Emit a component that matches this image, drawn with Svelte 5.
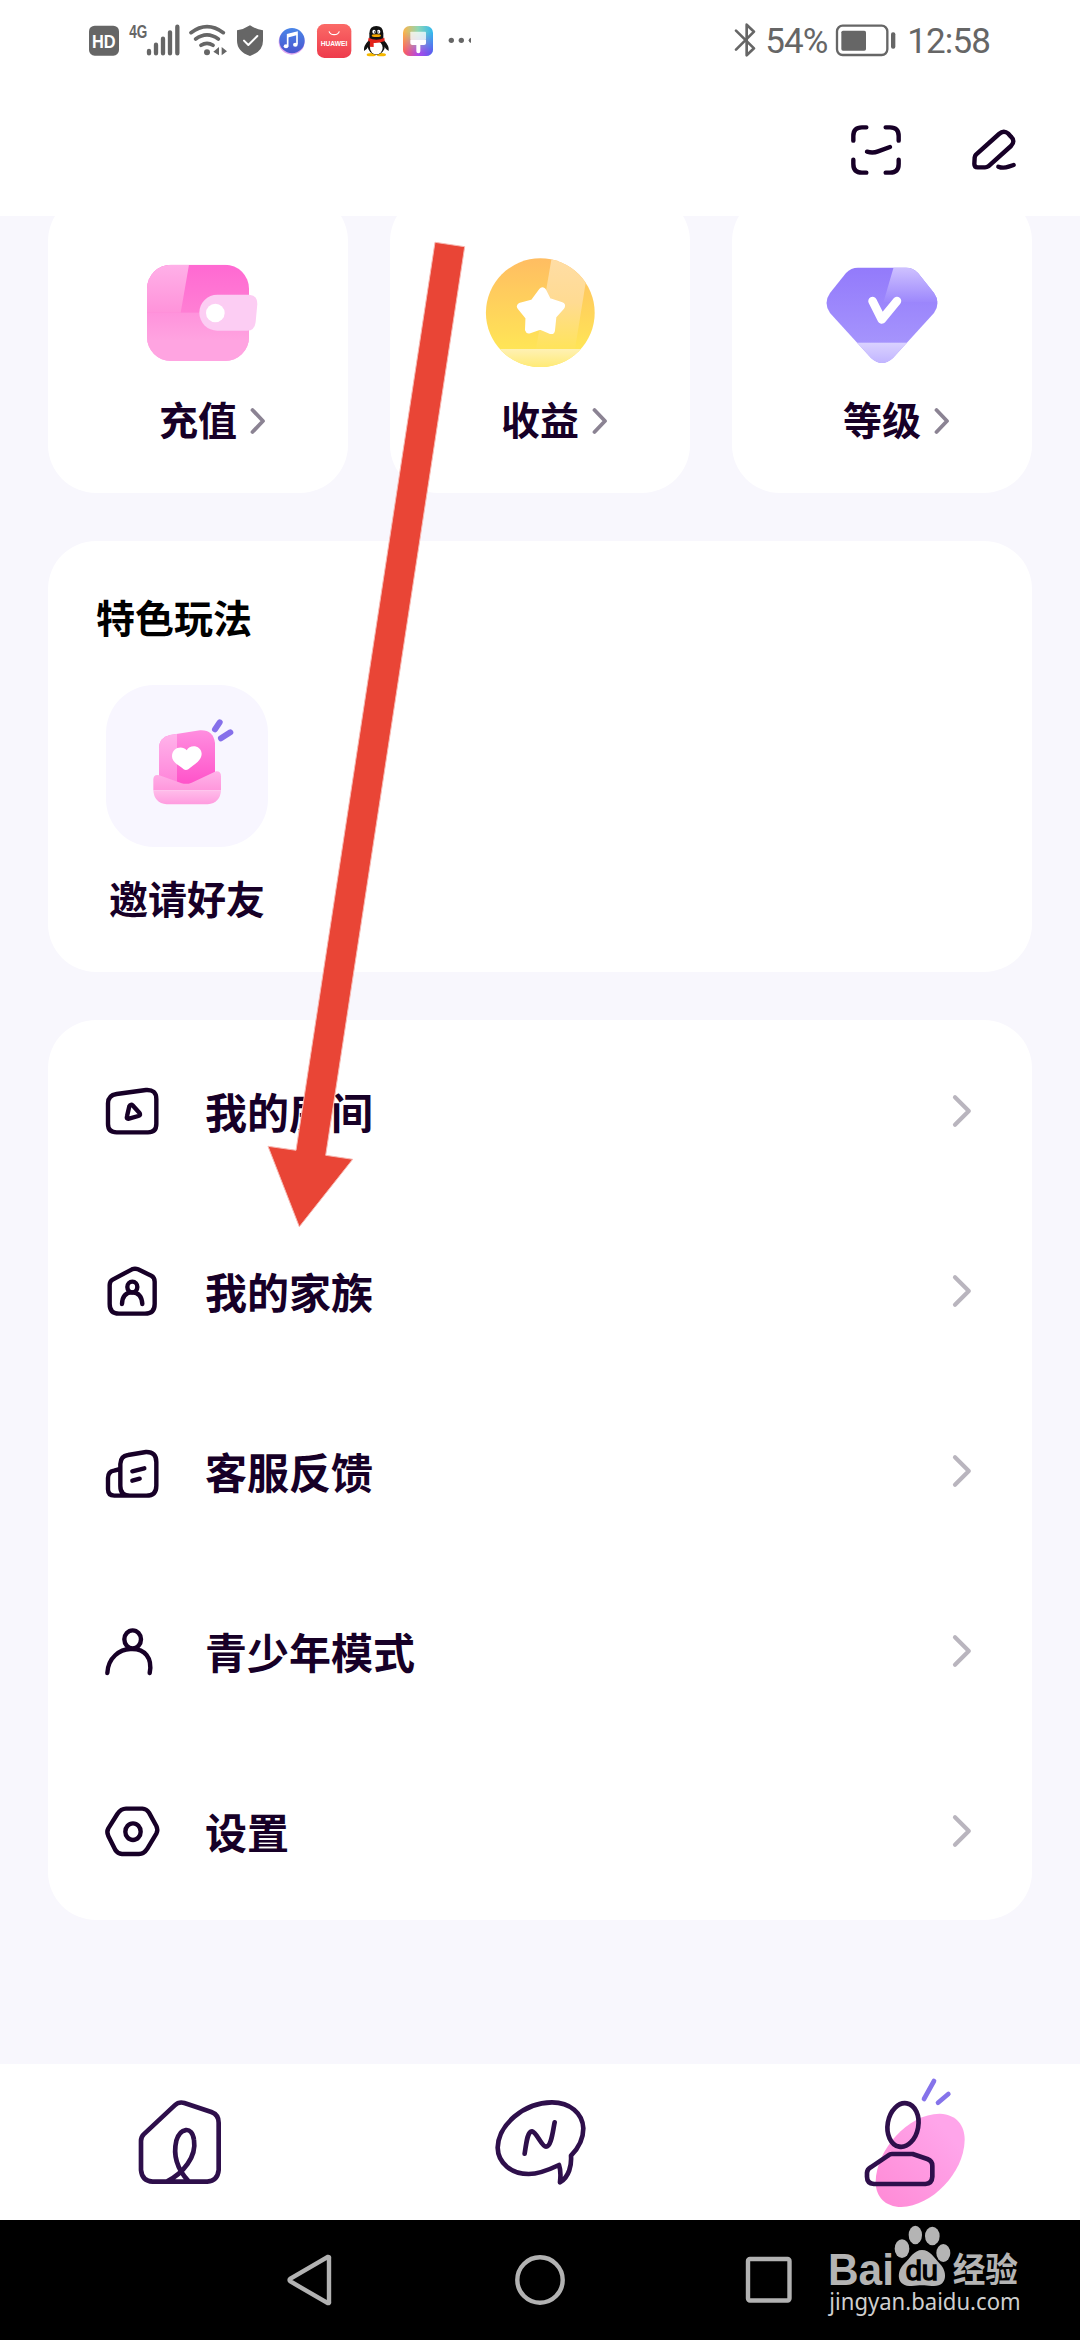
<script lang="ts">
  const menu = [
    { id: 'room', label: '我的房间' },
    { id: 'family', label: '我的家族' },
    { id: 'feedback', label: '客服反馈' },
    { id: 'teen', label: '青少年模式' },
    { id: 'settings', label: '设置' }
  ];

  const assets = [
    { id: 'recharge', label: '充值' },
    { id: 'income', label: '收益' },
    { id: 'level', label: '等级' }
  ];
</script>

<div class="screen">
  <div class="status-bar">
    <div class="status-left">
      <svg width="30" height="40" viewBox="57 60 90 120">
        <rect x="57" y="77" width="90" height="90" rx="17" fill="#666" />
        <text x="66" y="144" font-size="56" font-weight="700" textLength="71" lengthAdjust="spacingAndGlyphs" fill="#fff">HD</text>
      </svg>
      <svg width="54" height="40" viewBox="171 60 162 120">
        <text x="178" y="115" font-size="54" font-weight="700" textLength="54" lengthAdjust="spacingAndGlyphs" fill="#666">4G</text>
        <g stroke="#666" stroke-width="13" stroke-linecap="round">
          <path d="M237 153V160M258 134V160M279 116V160M300 97V160M322 80V160" />
        </g>
      </svg>
      <svg width="39" height="40" viewBox="357 60 117 120">
        <g fill="none" stroke="#666" stroke-width="11" stroke-linecap="round">
          <path d="M363 98Q411 62 460 98M377 117Q411 92 445 117M393 136Q411 124 429 136" />
        </g>
        <circle cx="411" cy="157" r="9" fill="#666" />
        <path d="M447 141V166L430 155ZM455 141V166L471 154Z" fill="#666" />
      </svg>
      <svg width="28" height="40" viewBox="498 60 84 120">
        <path d="M540 76Q558 88 579 91V122Q579 154 540 168Q501 154 501 122V91Q522 88 540 76Z" fill="#666" />
        <path d="M522 122L535 135L562 108" fill="none" stroke="#fff" stroke-width="6" stroke-linecap="round" stroke-linejoin="round" />
      </svg>
      <svg width="36" height="40" viewBox="606 60 108 120">
        <defs>
          <linearGradient id="music" x1="0" y1="0" x2="0" y2="1">
            <stop offset="0" stop-color="#4a86e8" />
            <stop offset="1" stop-color="#4a55cf" />
          </linearGradient>
        </defs>
        <circle cx="665" cy="125" r="39" fill="#e0a8f0" />
        <circle cx="666" cy="122" r="38" fill="url(#music)" />
        <path d="M653 139V104L681 97V133" fill="none" stroke="#fff" stroke-width="5" />
        <path d="M653 108L681 101" stroke="#fff" stroke-width="9" />
        <ellipse cx="648" cy="139" rx="7" ry="6" fill="#fff" />
        <ellipse cx="676" cy="134" rx="7" ry="6" fill="#fff" />
      </svg>
      <svg width="36" height="40" viewBox="738 60 108 120">
        <defs>
          <linearGradient id="huawei" x1="0" y1="0" x2="0" y2="1">
            <stop offset="0" stop-color="#fb6a67" />
            <stop offset="1" stop-color="#ee3b4c" />
          </linearGradient>
        </defs>
        <rect x="741" y="72" width="103" height="102" rx="22" fill="url(#huawei)" />
        <path d="M777 94A16 13 0 0 0 808 94" fill="none" stroke="#fff" stroke-width="3.5" />
        <text x="752" y="138" font-size="19" font-weight="700" textLength="80" lengthAdjust="spacingAndGlyphs" fill="#fff">HUAWEI</text>
      </svg>
      <svg width="34" height="40" viewBox="870 60 102 120">
        <ellipse cx="904" cy="164" rx="14" ry="5" fill="#f5b800" />
        <ellipse cx="934" cy="164" rx="14" ry="5" fill="#f5b800" />
        <path d="M897 120Q879 138 882 153Q890 150 896 138ZM941 120Q959 138 956 153Q948 150 942 138Z" fill="#111" />
        <ellipse cx="919" cy="137" rx="26" ry="27" fill="#111" />
        <path d="M898 118V100Q899 78 919 78Q939 78 940 100V118Z" fill="#111" />
        <ellipse cx="919" cy="143" rx="19" ry="20" fill="#fff" />
        <ellipse cx="912" cy="95" rx="5" ry="6" fill="#fff" />
        <ellipse cx="926" cy="95" rx="5" ry="6" fill="#fff" />
        <circle cx="914" cy="96" r="2" fill="#111" />
        <circle cx="924" cy="96" r="2" fill="#111" />
        <ellipse cx="919" cy="107" rx="14" ry="4" fill="#f5a800" />
        <path d="M896 113Q919 125 943 113L944 123Q928 130 911 129V141L899 140L900 125L894 122Z" fill="#e2231a" />
      </svg>
      <svg width="32" height="40" viewBox="996 60 96 120">
        <defs>
          <linearGradient id="themeBase" x1="0" y1="0" x2="1" y2="0">
            <stop offset="0" stop-color="#ffb347" />
            <stop offset="0.5" stop-color="#8fd6b4" />
            <stop offset="1" stop-color="#30b8f0" />
          </linearGradient>
          <linearGradient id="themeLow" x1="0" y1="0" x2="1" y2="0">
            <stop offset="0" stop-color="#ff5a5a" />
            <stop offset="0.5" stop-color="#b04ae8" />
            <stop offset="1" stop-color="#5a5af0" />
          </linearGradient>
          <linearGradient id="themeFade" x1="0" y1="0" x2="0" y2="1">
            <stop offset="0.2" stop-color="#000" />
            <stop offset="0.9" stop-color="#fff" />
          </linearGradient>
          <mask id="themeMask">
            <rect x="999" y="78" width="90" height="90" fill="url(#themeFade)" />
          </mask>
        </defs>
        <rect x="999" y="78" width="90" height="90" rx="20" fill="url(#themeBase)" />
        <rect x="999" y="78" width="90" height="90" rx="20" fill="url(#themeLow)" mask="url(#themeMask)" />
        <rect x="1021" y="95" width="47" height="25" rx="2" fill="#fff" opacity="0.75" />
        <path d="M1021 120H1068V130Q1068 135 1062 135H1051V154Q1051 160 1045 160Q1039 160 1039 154V135H1027Q1021 135 1021 130Z" fill="#fff" />
      </svg>
      <svg width="30" height="40" viewBox="1116 60 90 120">
        <circle cx="1144" cy="121" r="8" fill="#666" />
        <circle cx="1174" cy="121" r="8" fill="#666" />
        <path d="M1203 113V129Q1196 127 1196 121Q1196 115 1203 113Z" fill="#666" />
      </svg>
    </div>
    <div class="status-right">
      <svg width="24" height="40" viewBox="96 60 72 120">
        <path d="M105 92L159 145L137 166V74L159 95L105 149" fill="none" stroke="#666" stroke-width="8" stroke-linecap="round" stroke-linejoin="round" />
      </svg>
      <span class="battery-text">54%</span>
      <svg width="61" height="40" viewBox="402 60 183 120">
        <rect x="408" y="77" width="151" height="88" rx="17" fill="none" stroke="#666" stroke-width="7" />
        <rect x="421" y="92" width="74" height="60" rx="5" fill="#666" />
        <rect x="570" y="97" width="13" height="49" rx="6" fill="#666" />
      </svg>
      <span class="clock">12:58</span>
    </div>
  </div>

  <header class="header">
    <svg width="60" height="60" viewBox="438 361 180 180" class="line">
      <path d="M460 423V409Q460 383 486 383H499M557 383H570Q596 383 596 409V423M596 480V493Q596 519 570 519H557M499 519H486Q460 519 460 493V480M501 456Q519 461 534 455L570 442" />
    </svg>
    <svg width="60" height="60" viewBox="793 361 180 180" class="line">
      <path d="M829 465L898 403Q912 390 926 402L934 411Q948 424 934 439L866 500Q862 503 856 503H834Q824 503 824 493L825 474Q826 468 829 465ZM896 501Q910 507 927 501L942 496" />
    </svg>
  </header>

  <main class="content">
    <div class="assets">
      {#each assets as asset}
        <div class="asset">
          {#if asset.id === 'recharge'}
            <svg width="120" height="120" viewBox="324 159 360 360">
              <defs>
                <linearGradient id="walletBase" x1="0" y1="0" x2="0" y2="1">
                  <stop offset="0" stop-color="#ff69d2" />
                  <stop offset="0.5" stop-color="#ff7fd4" />
                  <stop offset="1" stop-color="#ffa6e4" />
                </linearGradient>
                <linearGradient id="walletShine" x1="0" y1="0" x2="0" y2="1">
                  <stop offset="0" stop-color="#ffb0e8" />
                  <stop offset="1" stop-color="#ff93da" />
                </linearGradient>
                <linearGradient id="walletLow" x1="0" y1="0" x2="0" y2="1">
                  <stop offset="0" stop-color="#ff93dc" />
                  <stop offset="1" stop-color="#ffa3e0" />
                </linearGradient>
                <clipPath id="walletClip"><rect x="351" y="194" width="306" height="289" rx="72" /></clipPath>
              </defs>
              <g clip-path="url(#walletClip)">
                <rect x="351" y="194" width="306" height="289" fill="url(#walletBase)" />
                <path d="M351 194H477L452 338H351Z" fill="url(#walletShine)" />
                <rect x="351" y="338" width="306" height="82" fill="url(#walletLow)" />
                <rect x="351" y="420" width="306" height="63" fill="#ffa4e1" />
              </g>
              <path d="M562 284H657Q682 286 682 312L677 365Q674 392 651 392H562A54 54 0 0 1 562 284Z" fill="#fccdf3" />
              <circle cx="556" cy="339" r="28" fill="#fff" />
            </svg>
          {:else if asset.id === 'income'}
            <svg width="120" height="120" viewBox="480 253 120 120">
              <defs>
                <linearGradient id="coinBase" x1="0" y1="0" x2="0" y2="1">
                  <stop offset="0" stop-color="#ffbd62" />
                  <stop offset="0.85" stop-color="#ffe656" />
                </linearGradient>
                <linearGradient id="coinShine" x1="0" y1="0" x2="0" y2="1">
                  <stop offset="0" stop-color="#ffdda6" />
                  <stop offset="0.5" stop-color="#ffdb92" />
                  <stop offset="1" stop-color="#ffe45a" />
                </linearGradient>
                <linearGradient id="coinLow" x1="0" y1="0" x2="0" y2="1">
                  <stop offset="0" stop-color="#fff1b4" />
                  <stop offset="1" stop-color="#ffea70" />
                </linearGradient>
                <clipPath id="coinClip"><circle cx="540.3" cy="312.7" r="54.4" /></clipPath>
              </defs>
              <g clip-path="url(#coinClip)">
                <rect x="485" y="258" width="110" height="110" fill="url(#coinBase)" />
                <path d="M552 256H590L575 349H536Z" fill="url(#coinShine)" />
                <rect x="485" y="349" width="110" height="20" fill="url(#coinLow)" />
              </g>
              <path d="M542.5 291.5L547.5 301.5L561 306L552.5 315.5L551 330L540.5 325.5L529 329.5L529.5 317L521 306.5L534 303Z" fill="#fff" stroke="#fff" stroke-width="8" stroke-linejoin="round" />
            </svg>
          {:else}
            <svg width="120" height="120" viewBox="822 253 120 120">
              <defs>
                <linearGradient id="gemBase" x1="0" y1="0" x2="0" y2="1">
                  <stop offset="0" stop-color="#9279fb" />
                  <stop offset="1" stop-color="#ab9cfd" />
                </linearGradient>
                <linearGradient id="gemShine" x1="0" y1="0" x2="0" y2="1">
                  <stop offset="0" stop-color="#cfc2ff" />
                  <stop offset="1" stop-color="#9d88fc" />
                </linearGradient>
                <linearGradient id="gemLow" x1="0" y1="0" x2="0" y2="1">
                  <stop offset="0" stop-color="#dad2ff" />
                  <stop offset="1" stop-color="#bdb0ff" />
                </linearGradient>
                <clipPath id="gemClip">
                  <path d="M858 267.7H906Q913 267.7 918 273L934 293Q941 303 934 313L893 358Q882 368 871 358L830 313Q823 303 830 293L846 273Q851 267.7 858 267.7Z" />
                </clipPath>
              </defs>
              <g clip-path="url(#gemClip)">
                <rect x="822" y="264" width="120" height="104" fill="url(#gemBase)" />
                <path d="M893.7 267L883.5 302H942V267Z" fill="url(#gemShine)" />
                <rect x="822" y="342.7" width="120" height="24" fill="url(#gemLow)" />
              </g>
              <path d="M872.5 301L881.8 319.5L897 301" fill="none" stroke="#fff" stroke-width="8.5" stroke-linecap="round" stroke-linejoin="round" />
            </svg>
          {/if}
          <div class="asset-label">
            <span>{asset.label}</span>
            <svg width="16" height="28" viewBox="0 0 16 28">
              <path d="M2.5 3L13 14L2.5 25" fill="none" stroke="#8b8393" stroke-width="3.8" stroke-linecap="round" stroke-linejoin="round" />
            </svg>
          </div>
        </div>
      {/each}
    </div>

    <section class="features">
      <h2>特色玩法</h2>
      <div class="feature">
        <div class="feature-tile">
          <svg width="162" height="162" viewBox="198 464 486 486">
            <defs>
              <linearGradient id="letter" x1="0" y1="0" x2="0" y2="1">
                <stop offset="0" stop-color="#ff8fe0" />
                <stop offset="1" stop-color="#ff4fc8" />
              </linearGradient>
              <linearGradient id="letterShine" x1="0" y1="0" x2="0" y2="1">
                <stop offset="0" stop-color="#ffb8ec" />
                <stop offset="1" stop-color="#ff80d8" />
              </linearGradient>
              <linearGradient id="envelope" x1="0" y1="0" x2="0" y2="1">
                <stop offset="0" stop-color="#ffb3e9" />
                <stop offset="1" stop-color="#ff97dc" />
              </linearGradient>
              <linearGradient id="envelopeLow" x1="0" y1="0" x2="0" y2="1">
                <stop offset="0" stop-color="#ffbdea" />
                <stop offset="1" stop-color="#ff9bdf" />
              </linearGradient>
              <clipPath id="letterClip">
                <path d="M357 770V655Q357 621 390 614L480 600Q520 598 525 638V770Z" />
              </clipPath>
            </defs>
            <g clip-path="url(#letterClip)">
              <rect x="357" y="596" width="168" height="176" fill="url(#letter)" />
              <rect x="357" y="596" width="54" height="176" fill="url(#letterShine)" />
            </g>
            <path d="M340 746Q342 730 358 735L425 759Q440 763 455 757L528 723Q543 722 543 738V780H340Z" fill="url(#envelope)" />
            <path d="M340 780H543Q541 818 503 822H380Q342 818 340 780Z" fill="url(#envelopeLow)" />
            <path d="M440 660C428 645 396 650 396 678C396 698 420 706 431 717Q438 722 446 716C458 705 485 692 485 670C484 645 450 640 440 660Z" fill="#fff" />
            <path d="M525 597L539 576M543 624L571 606" stroke="#8670ea" stroke-width="18" stroke-linecap="round" />
          </svg>
        </div>
        <span class="feature-label">邀请好友</span>
      </div>
    </section>

    <ul class="menu">
      {#each menu as item}
        <li class="menu-item">
          {#if item.id === 'room'}
            <svg width="60" height="60" viewBox="186 210 180 180" class="line">
              <path d="M230 252L318 240Q349 238 349 267V342Q349 367 324 367H230Q204 367 204 342V280Q204 256 230 252ZM268 289Q272 281 279 287L298 308Q304 315 295 318L267 326Q258 328 261 319Z" />
            </svg>
          {:else if item.id === 'family'}
            <svg width="60" height="60" viewBox="186 750 180 180" class="line">
              <path d="M218 809L276 778Q285 774 294 778L334 797Q344 802 344 815V882Q344 911 315 911H237Q209 911 209 882V825Q209 814 218 809Z" />
              <ellipse cx="277" cy="831" rx="15" ry="16" />
              <path d="M246 882Q247 847 277 847Q305 848 307 882" />
            </svg>
          {:else if item.id === 'feedback'}
            <svg width="60" height="60" viewBox="186 120 180 180" class="line">
              <path d="M264 165L318 156Q349 155 349 186V257Q349 287 319 287H270Q241 287 241 258V192Q242 168 264 165ZM241 207L222 212Q204 215 204 234V268Q204 287 223 287H270M277 214L313 205M277 242L299 236" />
            </svg>
          {:else if item.id === 'teen'}
            <svg width="60" height="60" viewBox="186 660 180 180" class="line">
              <ellipse cx="278" cy="718" rx="25" ry="27" />
              <path d="M202 819C204 772 240 748 271 747C315 744 338 775 329 819" />
            </svg>
          {:else}
            <svg width="60" height="60" viewBox="186 1200 180 180" class="line">
              <path d="M258 1226H307Q320 1227 327 1238L349 1278Q355 1290 349 1301L322 1346Q312 1362 297 1362H246Q233 1361 226 1350L205 1308Q199 1296 205 1285L232 1242Q243 1226 258 1226Z" />
              <ellipse cx="279" cy="1295" rx="23" ry="25" />
            </svg>
          {/if}
          <span class="menu-label">{item.label}</span>
          <svg width="24" height="36" viewBox="0 0 24 36">
            <path d="M4 5.2L17.8 19L4 32.8" fill="none" stroke="#b9b5be" stroke-width="4.2" stroke-linecap="round" stroke-linejoin="round" />
          </svg>
        </li>
      {/each}
    </ul>
  </main>

  <nav class="tabs">
    <svg width="180" height="156" viewBox="-30 42 540 468" class="tab-icon">
      <path d="M131 253L224 166Q237 154 253 159L334 186Q356 194 356 218V360Q353 392 322 395H158Q126 393 123 360V273Q123 261 131 253ZM200 395C250 370 290 320 282 270C276 225 240 235 229 272C220 310 225 350 266 394" />
    </svg>
    <svg width="180" height="156" viewBox="1050 42 540 468" class="tab-icon">
      <path d="M1413 317C1440 290 1450 260 1450 235C1448 190 1410 157 1356 157C1270 158 1195 225 1193 293C1194 340 1235 372 1286 372C1320 372 1350 358 1377 345C1383 362 1382 380 1380 397C1408 380 1415 345 1413 317ZM1274 311C1280 270 1283 245 1296 244C1310 246 1325 290 1338 290C1354 290 1358 245 1364 217" />
    </svg>
    <svg width="180" height="156" viewBox="30 42 540 468" class="tab-icon">
      <defs>
        <linearGradient id="blob" x1="1" y1="0" x2="0" y2="1">
          <stop offset="0.2" stop-color="#ffa5ea" />
          <stop offset="0.9" stop-color="#ff8dd8" />
        </linearGradient>
      </defs>
      <path d="M420 191C470 194 494 225 494 270C492 370 395 468 304 471C255 470 227 440 227 395C228 300 325 190 420 191Z" fill="url(#blob)" stroke="none" />
      <ellipse cx="309" cy="225" rx="46" ry="66" transform="rotate(10 309 225)" />
      <path d="M276 312H338L382 327Q397 333 397 347V380Q396 401 376 402H222Q201 400 201 380V368Q202 358 212 352L264 317Q270 312 276 312Z" />
      <path d="M372 147L402 93M414 158L445 132" class="spark" />
    </svg>
  </nav>

  <div class="system-nav">
    <svg width="60" height="60" viewBox="0 0 60 60">
      <path d="M49 8.5Q49.5 6.500 47.5 7L10.5 28.5Q8.500 30 10.5 31.5L47.5 53Q49.5 53.5 49 51.5Z" />
    </svg>
    <svg width="60" height="60" viewBox="0 0 60 60">
      <circle cx="30" cy="30" r="22.7" />
    </svg>
    <svg width="60" height="60" viewBox="0 0 60 60">
      <rect x="9" y="9" width="41.5" height="41.5" rx="2" />
    </svg>
  </div>

  <svg class="pointer" width="1080" height="2340" viewBox="0 0 1080 2340">
    <path d="M435 242.3L464.7 246.7L325.7 1155.3L352.7 1159.3L299.3 1226.7L268 1146.3L296 1150.3Z" fill="#e94536" stroke="#f7b9b3" stroke-width="1" />
  </svg>

  <svg class="watermark" width="240" height="120" viewBox="75 510 720 360">
    <g fill="#b4b4b4">
      <text x="84" y="704" font-size="132" font-weight="700" textLength="198" lengthAdjust="spacingAndGlyphs">Bai</text>
      <ellipse cx="306" cy="596" rx="22" ry="28" />
      <ellipse cx="346" cy="555" rx="20" ry="28" />
      <ellipse cx="397" cy="558" rx="22" ry="28" />
      <ellipse cx="430" cy="609" rx="21" ry="27" />
      <path d="M366 600C390 600 402 622 420 642C440 660 446 708 402 708C385 709 378 706 366 706C354 706 345 709 328 708C286 705 292 660 312 642C330 625 342 600 366 600Z" />
      <text x="458" y="697" font-size="101" class="cjk" textLength="196" lengthAdjust="spacingAndGlyphs">经验</text>
    </g>
    <text x="317" y="689" font-size="82" textLength="97" lengthAdjust="spacingAndGlyphs" fill="#000" stroke="#000" stroke-width="4">du</text>
    <text x="88" y="780" font-size="68" class="url" textLength="574" lengthAdjust="spacingAndGlyphs" fill="#cfcfcf">jingyan.baidu.com</text>
  </svg>
</div>

<style>
  :global(body) {
    margin: 0;
  }

  .screen {
    position: relative;
    display: flex;
    flex-direction: column;
    width: 1080px;
    height: 2340px;
    overflow: hidden;
    background: #f8f7fd;
    color: #170027;
    font-family: 'Liberation Sans', 'Noto Sans CJK SC', sans-serif;
  }

  svg {
    display: block;
    flex: none;
  }

  .status-bar {
    display: flex;
    justify-content: space-between;
    height: 80px;
    padding: 20px 90px 0 89px;
    box-sizing: border-box;
    background: #fff;
  }

  .status-left {
    display: flex;
    gap: 8px;
  }

  .status-right {
    display: flex;
    color: #666;
    font-family: Roboto, sans-serif;
    font-size: 35px;
    line-height: 44px;
    white-space: nowrap;
  }

  .battery-text {
    width: 70px;
    margin-left: 8px;
    letter-spacing: -1px;
  }

  .clock {
    margin-left: 11px;
    letter-spacing: -0.9px;
  }

  .header {
    display: flex;
    justify-content: flex-end;
    gap: 58px;
    height: 136px;
    padding: 40px 56px 0 0;
    box-sizing: border-box;
    background: #fff;
  }

  .line {
    fill: none;
    stroke: #170027;
    stroke-width: 13.2;
    stroke-linecap: round;
    stroke-linejoin: round;
  }

  .content {
    display: flex;
    flex-direction: column;
    gap: 48px;
    height: 1848px;
    padding: 0 48px;
    box-sizing: border-box;
    overflow: hidden;
  }

  .assets {
    display: flex;
    gap: 42px;
    margin-top: -23px;
  }

  .asset {
    display: flex;
    flex: 1;
    flex-direction: column;
    align-items: center;
    height: 300px;
    padding-top: 60px;
    box-sizing: border-box;
    border-radius: 48px;
    background: #fff;
  }

  .asset-label {
    display: flex;
    align-items: center;
    gap: 13px;
    height: 56px;
    margin-top: 20px;
    padding-left: 29px;
    font-size: 39px;
    font-weight: 700;
  }

  .asset-label span {
    padding-bottom: 6px;
  }

  .features {
    flex: none;
    height: 431px;
    padding: 51px 48px 0;
    box-sizing: border-box;
    border-radius: 48px;
    background: #fff;
  }

  h2 {
    margin: 0;
    color: #000;
    font-size: 39px;
    font-weight: 700;
    line-height: 56px;
  }

  .feature {
    display: flex;
    flex-direction: column;
    align-items: center;
    width: 162px;
    margin: 37px 0 0 10px;
  }

  .feature-tile {
    width: 162px;
    height: 162px;
    border-radius: 48px;
    background: #f8f6ff;
  }

  .feature-label {
    margin-top: 26px;
    font-size: 39px;
    font-weight: 700;
    line-height: 56px;
    white-space: nowrap;
  }

  .menu {
    flex: none;
    margin: 0;
    padding: 0;
    border-radius: 48px;
    background: #fff;
    list-style: none;
  }

  .menu-item {
    display: flex;
    align-items: center;
    height: 180px;
    padding: 0 57px 0 54px;
    box-sizing: border-box;
  }

  .menu-label {
    flex: 1;
    margin-left: 43px;
    font-size: 42px;
    font-weight: 700;
  }

  .tabs {
    display: flex;
    justify-content: space-around;
    height: 156px;
    background: #fff;
  }

  .tab-icon {
    fill: none;
    stroke: #2e0f4b;
    stroke-width: 14;
    stroke-linecap: round;
    stroke-linejoin: round;
  }

  .spark {
    stroke: #8573ea;
  }

  .system-nav {
    display: flex;
    justify-content: space-between;
    align-items: center;
    height: 120px;
    padding: 0 281px 0 280px;
    box-sizing: border-box;
    background: #000;
    fill: none;
    stroke: #b2b2b2;
    stroke-width: 4.4;
  }

  .pointer {
    position: absolute;
    top: 0;
    left: 0;
  }

  .watermark {
    position: absolute;
    top: 2220px;
    left: 825px;
  }

  .cjk {
    font-family: 'Noto Sans CJK SC', sans-serif;
    font-weight: 700;
  }

  .url {
    font-family: 'Noto Sans', sans-serif;
  }
</style>
